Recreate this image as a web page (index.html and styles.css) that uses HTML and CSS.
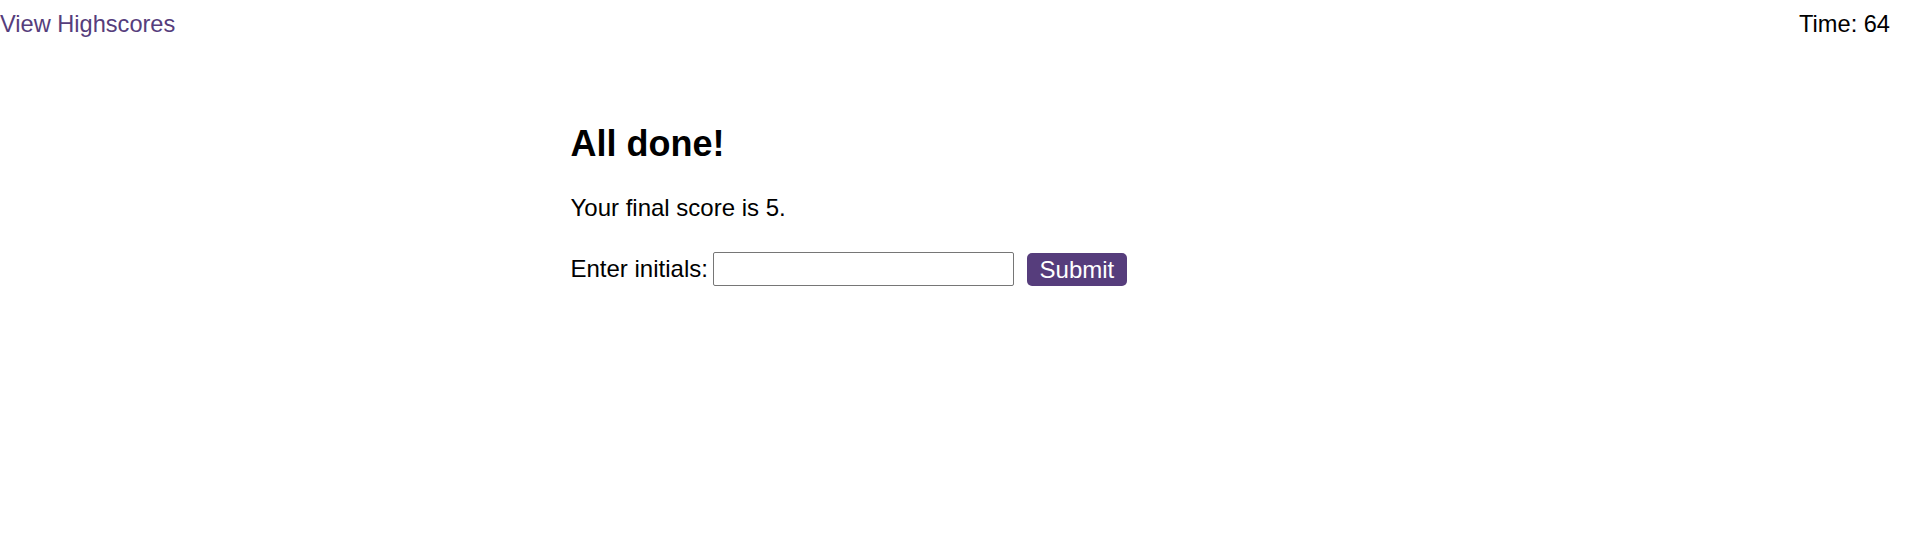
FILE: index.html
```html
<!DOCTYPE html>
<html lang="en">
<head>
<meta charset="utf-8">
<title>Quiz</title>
<link rel="stylesheet" href="styles.css">
</head>
<body>
<header class="top-bar">
  <a class="highscores-link" href="#">View Highscores</a>
  <div class="timer">Time: 64</div>
</header>
<main class="quiz">
  <h1 class="quiz-title">All done!</h1>
  <p class="final-score">Your final score is 5.</p>
  <form class="initials-form">
    <label class="initials-label" for="initials">Enter initials:</label>
    <input class="initials-input" id="initials" type="text">
    <button class="submit-btn" type="button">Submit</button>
  </form>
</main>
</body>
</html>
```

FILE: styles.css
```css
html, body {
  margin: 0;
  padding: 0;
  background: #ffffff;
}

body {
  font-family: "Liberation Sans", Arial, sans-serif;
  font-size: 18px;
  color: #000000;
}

.top-bar {
  display: flex;
  justify-content: space-between;
  align-items: baseline;
  padding: 9px 15px 0 0;
  font-size: 23.6px;
  line-height: 30px;
}

.highscores-link {
  color: #563d7c;
  text-decoration: none;
}

.timer {
  color: #000000;
}

.quiz {
  width: 40%;
  margin: 85px auto 0;
}

.quiz-title {
  margin: 0 0 0 -1px;
  font-size: 36px;
  line-height: 40px;
  font-weight: bold;
}

.final-score {
  margin: 31px 0 0 -1px;
  font-size: 24px;
  line-height: 26px;
}

.initials-form {
  margin: 31px 0 0 -1px;
  display: flex;
  align-items: center;
}

.initials-label {
  font-size: 24px;
  line-height: 26px;
  margin-right: 5px;
}

.initials-input {
  box-sizing: border-box;
  width: 301px;
  height: 34px;
  margin: 0;
  border: 1px solid #767676;
  border-radius: 2px;
  padding: 0 4px;
  font-family: "Liberation Sans", Arial, sans-serif;
  font-size: 20px;
}

.submit-btn {
  box-sizing: border-box;
  width: 100px;
  height: 33px;
  margin: 0 0 0 13px;
  border: none;
  border-radius: 5px;
  background: #563d7c;
  color: #ffffff;
  font-family: "Liberation Sans", Arial, sans-serif;
  font-size: 24px;
  line-height: 33px;
  padding: 0;
}
```
